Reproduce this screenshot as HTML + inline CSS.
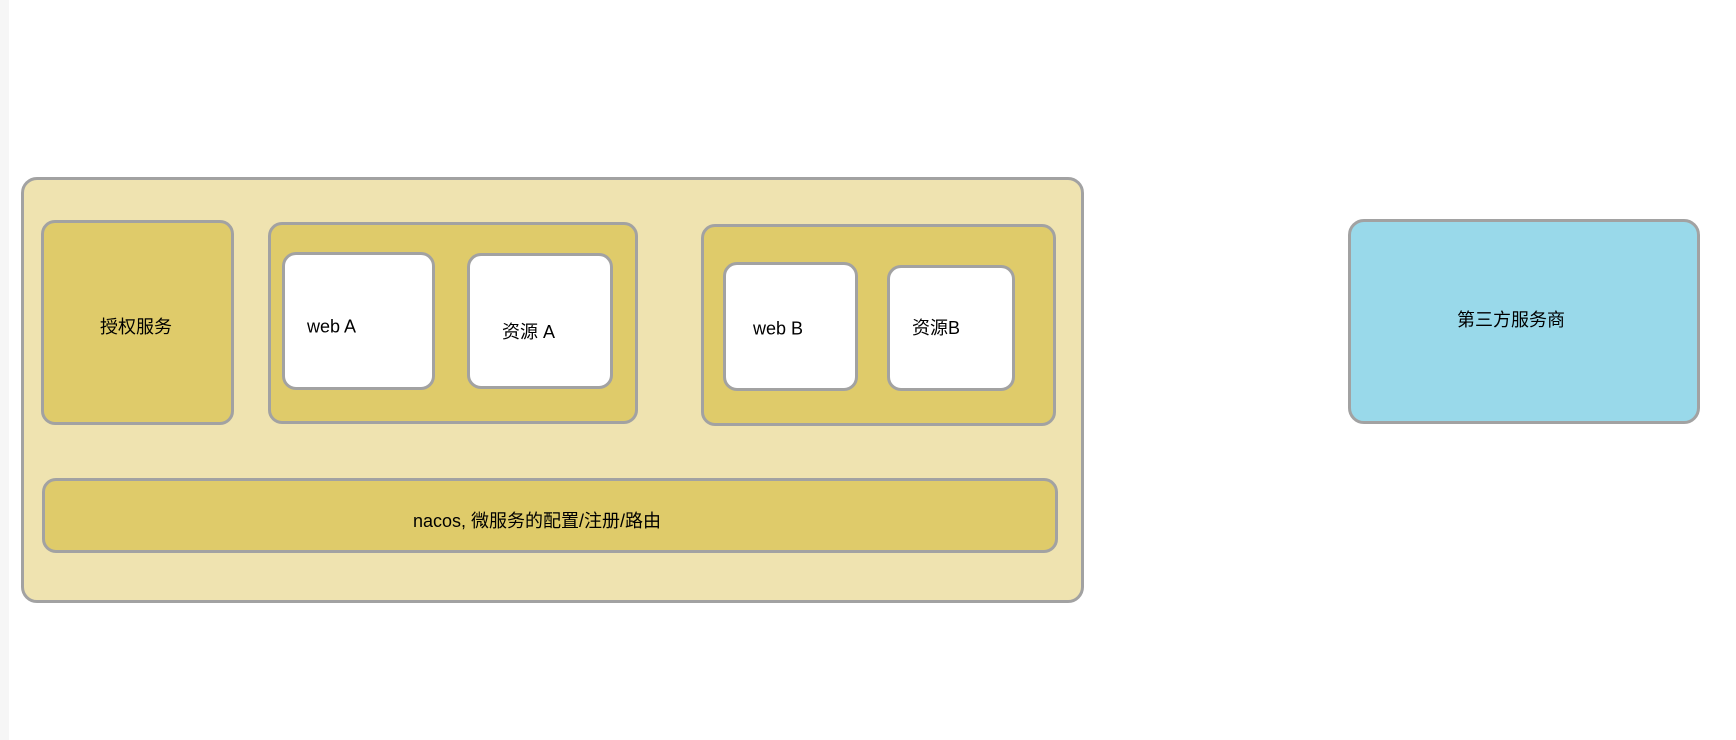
<!DOCTYPE html>
<html><head><meta charset="utf-8"><style>
body{margin:0;width:1736px;height:740px;background:#fff;position:relative;overflow:hidden;font-family:"Liberation Sans","Noto Sans CJK SC",sans-serif;font-size:18px;color:#000}
.strip{position:absolute;left:0;top:0;width:9px;height:740px;background:#f6f6f6}
.b{position:absolute;box-sizing:border-box;border:3px solid #a2a2a2;border-radius:14px}
.o{background:#efe3b0}
.y{background:#dfcb6a}
.w{background:#fff}
.c{background:#99d9ea}
.t{position:absolute;white-space:nowrap;transform:translate(-50%,-50%)}
.l{position:absolute;white-space:nowrap;transform:translateY(-50%)}
</style></head><body>
<div class="strip"></div>
<div class="b o" style="left:21px;top:177px;width:1063px;height:426px;border-radius:16px"></div>
<div class="b y" style="left:41px;top:220px;width:193px;height:205px"></div>
<div class="b y" style="left:268px;top:222px;width:370px;height:202px"></div>
<div class="b w" style="left:282px;top:252px;width:153px;height:138px"></div>
<div class="b w" style="left:467px;top:253px;width:146px;height:136px"></div>
<div class="b y" style="left:701px;top:224px;width:355px;height:202px"></div>
<div class="b w" style="left:723px;top:262px;width:135px;height:129px"></div>
<div class="b w" style="left:887px;top:265px;width:128px;height:126px"></div>
<div class="b y" style="left:42px;top:478px;width:1016px;height:75px"></div>
<div class="b c" style="left:1348px;top:219px;width:352px;height:205px;border-radius:16px"></div>
<div class="t" style="left:136px;top:326px">授权服务</div>
<div class="l" style="left:307px;top:327px">web A</div>
<div class="l" style="left:502px;top:331px">资源 A</div>
<div class="l" style="left:753px;top:329px">web B</div>
<div class="l" style="left:912px;top:327px">资源B</div>
<div class="t" style="left:537px;top:520px">nacos, 微服务的配置/注册/路由</div>
<div class="t" style="left:1511px;top:319px">第三方服务商</div>
</body></html>
